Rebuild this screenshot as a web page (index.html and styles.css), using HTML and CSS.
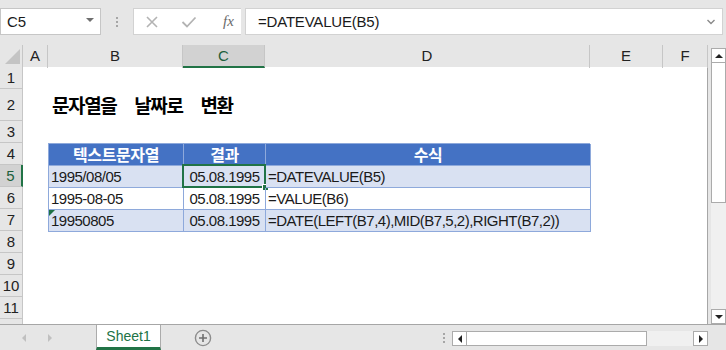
FILE: index.html
```html
<!DOCTYPE html>
<html lang="en">
<head>
    <meta charset="UTF-8">
    <title>문자열을 날짜로 변환</title>
    <link rel="stylesheet" href="styles.css">
</head>
<body>
<div class="app">
    <div class="toolbar">
        <div class="namebox">
            <span>C5</span>
            <span class="caret"></span>
        </div>
        <div class="grip"><i></i><i></i><i></i></div>
        <div class="fbtns">
            <svg width="14" height="14" viewBox="0 0 14 14"><path d="M2 2 L12 12 M12 2 L2 12" stroke="#b3b3b3" stroke-width="1.6" fill="none"/></svg>
            <svg width="16" height="14" viewBox="0 0 16 14"><path d="M1.5 7 L6 11.5 L14.5 2.5" stroke="#b3b3b3" stroke-width="1.8" fill="none"/></svg>
            <span class="fx">fx</span>
        </div>
        <div class="formula">
            <span>=DATEVALUE(B5)</span>
            <svg width="10" height="8" viewBox="0 0 10 8"><path d="M1.5 2 L5 5.5 L8.5 2" stroke="#8a8a8a" stroke-width="1.4" fill="none"/></svg>
        </div>
    </div>

    <div class="main">
        <div class="sheet">
            <div class="corner"><span class="tri"></span></div>
            <div class="colheads">
                <div class="ch">A</div>
                <div class="ch">B</div>
                <div class="ch sel">C</div>
                <div class="ch">D</div>
                <div class="ch">E</div>
                <div class="ch">F</div>
            </div>
            <div class="rowheads">
                <div class="rh">1</div>
                <div class="rh tall">2</div>
                <div class="rh">3</div>
                <div class="rh">4</div>
                <div class="rh sel">5</div>
                <div class="rh">6</div>
                <div class="rh">7</div>
                <div class="rh">8</div>
                <div class="rh">9</div>
                <div class="rh">10</div>
                <div class="rh">11</div>
                <div class="rh"></div>
            </div>
            <div class="cells">
                <div class="title">문자열을 날짜로 변환</div>
                <div class="tbl">
                    <div class="th">텍스트문자열</div>
                    <div class="th">결과</div>
                    <div class="th">수식</div>

                    <div class="td band">1995/08/05</div>
                    <div class="td band mid active">05.08.1995<span class="handle"></span></div>
                    <div class="td band">=DATEVALUE(B5)</div>

                    <div class="td">1995-08-05</div>
                    <div class="td mid">05.08.1995</div>
                    <div class="td">=VALUE(B6)</div>

                    <div class="td band flag">19950805</div>
                    <div class="td band mid">05.08.1995</div>
                    <div class="td band">=DATE(LEFT(B7,4),MID(B7,5,2),RIGHT(B7,2))</div>
                </div>
            </div>
        </div>
        <div class="vscroll">
            <div class="sbtn"><span class="up"></span></div>
            <div class="vthumb"></div>
            <div class="vtrack"></div>
            <div class="sbtn"><span class="down"></span></div>
        </div>
    </div>

    <div class="bottombar">
        <div class="nav">
            <span class="left"></span>
            <span class="right"></span>
        </div>
        <div class="tab">Sheet1</div>
        <div class="addsheet">
            <svg width="18" height="18" viewBox="0 0 18 18"><circle cx="9" cy="9" r="7.6" stroke="#8c8c8c" stroke-width="1.4" fill="none"/><path d="M9 5 V13 M5 9 H13" stroke="#707070" stroke-width="1.6"/></svg>
        </div>
        <div class="spacer"></div>
        <div class="grip"><i></i><i></i><i></i></div>
        <div class="hscroll">
            <div class="sbtn"><span class="left"></span></div>
            <div class="hthumb"></div>
            <div class="htrack"></div>
            <div class="sbtn"><span class="right"></span></div>
        </div>
    </div>
</div>
</body>
</html>
```

FILE: styles.css
```css
body {
    margin: 0;
    padding: 0;
    font-family: 'Liberation Sans', 'Noto Sans CJK KR', sans-serif;
    background: #e6e6e6;
    color: #1a1a1a;
}

.app {
    width: 726px;
    height: 350px;
    display: flex;
    flex-direction: column;
    overflow: hidden;
}

/* formula bar */
.toolbar {
    height: 45px;
    display: flex;
    align-items: flex-start;
    padding-top: 8px;
    box-sizing: border-box;
}

.namebox {
    width: 101px;
    height: 27px;
    box-sizing: border-box;
    background: #fff;
    border: 1px solid #c6c6c6;
    display: flex;
    align-items: center;
    justify-content: space-between;
    padding: 0 6px 0 6px;
    font-size: 15px;
}

.caret {
    width: 0;
    height: 0;
    border-left: 4px solid transparent;
    border-right: 4px solid transparent;
    border-top: 4px solid #6f6f6f;
    margin-top: -3px;
}

.grip {
    width: 32px;
    height: 27px;
    display: flex;
    flex-direction: column;
    align-items: center;
    justify-content: center;
    gap: 2px;
}

.grip i {
    width: 2px;
    height: 2px;
    background: #a6a6a6;
}

.fbtns {
    width: 108px;
    height: 27px;
    box-sizing: border-box;
    background: #fff;
    border: 1px solid #d2d2d2;
    border-right: none;
    display: flex;
    align-items: center;
    padding-left: 11px;
    gap: 22px;
}

.fx {
    font-family: 'Liberation Serif', serif;
    font-style: italic;
    font-size: 15px;
    color: #6a6a6a;
    margin-left: 4px;
}

.formula {
    width: 478px;
    height: 27px;
    margin-left: 4px;
    box-sizing: border-box;
    background: #fff;
    border: 1px solid #d2d2d2;
    display: flex;
    align-items: center;
    justify-content: space-between;
    padding: 0 6px 0 12px;
    font-size: 15px;
    letter-spacing: -0.2px;
}

/* sheet */
.main {
    height: 279px;
    display: flex;
}

.sheet {
    width: 708px;
    display: grid;
    grid-template-columns: 23px 685px;
    grid-template-rows: 22px 257px;
    background: #fff;
    border-right: 1px solid #a6a6a6;
    box-sizing: border-box;
}

.corner {
    background: #e6e6e6;
    border-right: 1px solid #c6c6c6;
    display: flex;
    justify-content: flex-end;
    align-items: flex-end;
    padding: 0 2px 3px 0;
}

.tri {
    width: 0;
    height: 0;
    border-left: 15px solid transparent;
    border-bottom: 15px solid #c4c4c4;
}

.colheads {
    display: grid;
    grid-template-columns: 25px 135px 82px 325px 73px 45px;
    background: #e6e6e6;
}

.ch {
    border-right: 1px solid #c6c6c6;
    text-align: center;
    font-size: 15px;
    line-height: 22px;
    color: #222;
}

.ch.sel {
    background: #d2d2d2;
    border-bottom: 2px solid #217346;
    line-height: 21px;
    color: #1d5f3c;
}

.rowheads {
    background: #e6e6e6;
    overflow: hidden;
}

.rh {
    height: 22px;
    box-sizing: border-box;
    border-bottom: 1px solid #c6c6c6;
    border-right: 1px solid #c6c6c6;
    text-align: center;
    font-size: 15px;
    line-height: 22px;
    color: #222;
}

.rh.tall {
    height: 32px;
    line-height: 32px;
}

.rh.sel {
    background: #d2d2d2;
    border-right: 2px solid #217346;
    color: #1d5f3c;
}

.cells {
    display: grid;
    grid-template-columns: 25px 135px 82px 325px 73px 45px;
    grid-template-rows: 22px 32px 22px repeat(9, 22px);
    overflow: hidden;
}

.title {
    grid-row: 2;
    grid-column: 2 / span 3;
    font-family: 'Noto Sans CJK KR', sans-serif;
    font-weight: bold;
    font-size: 19px;
    letter-spacing: -1.4px;
    word-spacing: 15px;
    line-height: 32px;
    padding-left: 4px;
    color: #000;
    white-space: nowrap;
}

.tbl {
    grid-row: 4 / span 4;
    grid-column: 2 / span 3;
    display: grid;
    grid-template-columns: 135px 82px 325px;
    grid-template-rows: repeat(4, 22px);
    border-left: 1px solid #8ea9db;
    border-top: 1px solid #8ea9db;
    align-self: start;
}

.th,
.td {
    border-right: 1px solid #8ea9db;
    border-bottom: 1px solid #8ea9db;
    font-size: 15px;
    line-height: 21px;
    white-space: nowrap;
    position: relative;
}

.th {
    background: #4472c4;
    color: #fff;
    text-align: center;
    font-family: 'Noto Sans CJK KR', sans-serif;
    font-weight: bold;
    font-size: 16px;
    letter-spacing: -0.4px;
}

.td {
    padding-left: 2px;
    letter-spacing: -0.5px;
}

.td.band {
    background: #d9e1f2;
}

.td.mid {
    text-align: center;
    padding-left: 0;
}

.td.active::before {
    content: '';
    position: absolute;
    left: -2px;
    top: -2px;
    right: -1px;
    bottom: -1px;
    border: 2px solid #217346;
}

.handle {
    position: absolute;
    right: -4px;
    bottom: -4px;
    width: 5px;
    height: 5px;
    background: #217346;
    border: 1px solid #fff;
}

.td.flag::before {
    content: '';
    position: absolute;
    left: 0;
    top: 0;
    border-top: 6px solid #1e7145;
    border-right: 6px solid transparent;
}

/* scrollbars */
.vscroll {
    width: 18px;
    background: #e6e6e6;
    display: flex;
    flex-direction: column;
    padding: 3px 0 0 3px;
    box-sizing: border-box;
}

.sbtn {
    width: 15px;
    height: 15px;
    box-sizing: border-box;
    background: #fff;
    border: 1px solid #ababab;
    display: flex;
    align-items: center;
    justify-content: center;
}

.up {
    border-left: 4px solid transparent;
    border-right: 4px solid transparent;
    border-bottom: 4px solid #222;
}

.down {
    border-left: 4px solid transparent;
    border-right: 4px solid transparent;
    border-top: 4px solid #222;
}

.vthumb {
    height: 140px;
    box-sizing: border-box;
    background: #fff;
    border: 1px solid #ababab;
    border-top: none;
}

.vtrack {
    flex: 1;
    background: #f0f0f0;
}

/* sheet tabs */
.bottombar {
    height: 26px;
    display: flex;
    align-items: flex-start;
    border-top: 1px solid #a6a6a6;
    box-sizing: border-box;
}

.nav {
    width: 96px;
    height: 25px;
    display: flex;
    align-items: center;
    gap: 22px;
    padding-left: 22px;
    box-sizing: border-box;
}

.nav .left,
.hscroll .left {
    border-top: 4px solid transparent;
    border-bottom: 4px solid transparent;
    border-right: 4px solid #c0c0c0;
}

.nav .right,
.hscroll .right {
    border-top: 4px solid transparent;
    border-bottom: 4px solid transparent;
    border-left: 4px solid #c0c0c0;
}

.hscroll .left {
    border-right-color: #222;
}

.hscroll .right {
    border-left-color: #222;
}

.tab {
    width: 65px;
    height: 25px;
    box-sizing: border-box;
    background: #fff;
    border-left: 1px solid #ababab;
    border-right: 1px solid #ababab;
    border-bottom: 3px solid #217346;
    text-align: center;
    font-size: 14px;
    line-height: 22px;
    color: #217346;
}

.addsheet {
    margin-left: 33px;
    height: 25px;
    display: flex;
    align-items: center;
}

.spacer {
    flex: 1;
}

.bottombar .grip {
    width: 16px;
    height: 25px;
}

.hscroll {
    width: 256px;
    margin: 6px 18px 0 0;
    height: 15px;
    display: flex;
}

.hthumb {
    width: 180px;
    box-sizing: border-box;
    background: #fff;
    border: 1px solid #ababab;
    border-left: none;
}

.htrack {
    flex: 1;
    background: #f0f0f0;
}
```
